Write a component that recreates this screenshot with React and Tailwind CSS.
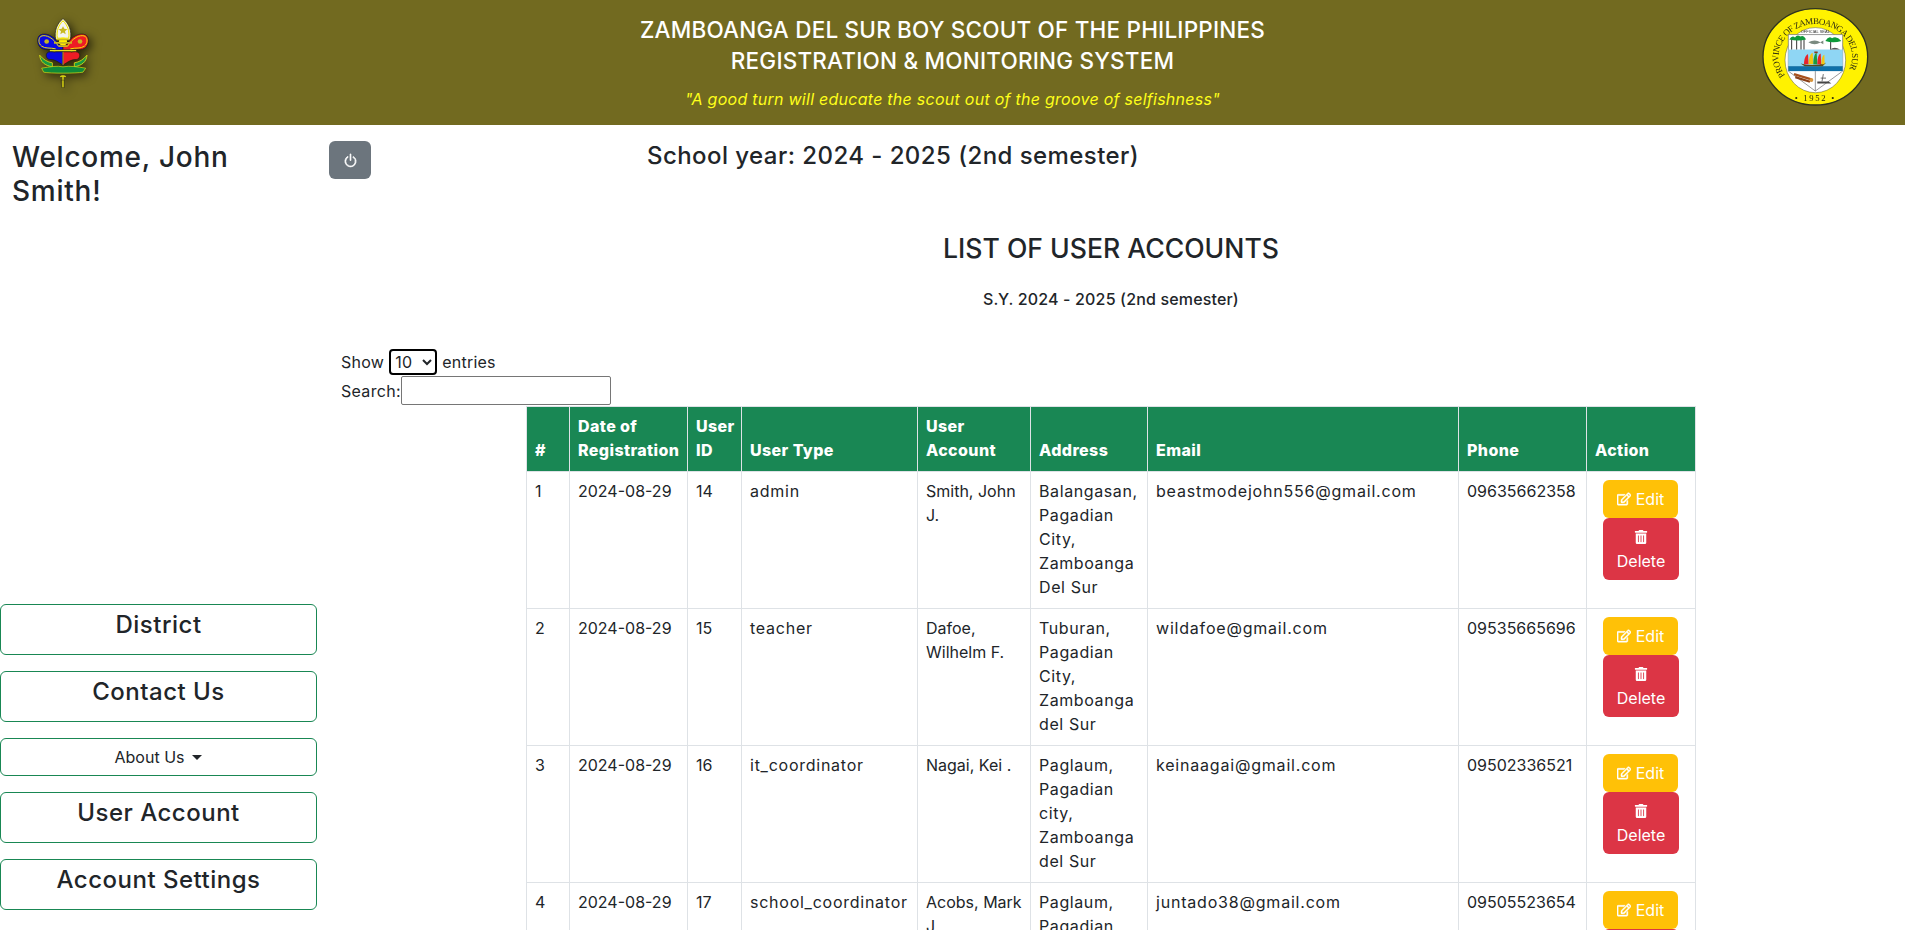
import { BsPower } from "react-icons/bs";
import { FaRegEdit, FaTrashAlt } from "react-icons/fa";

const accounts = [
  { id: 1, date: "2024-08-29", userId: 14, type: "admin", name: "Smith, John J.", address: "Balangasan, Pagadian City, Zamboanga Del Sur", email: "beastmodejohn556@gmail.com", phone: "09635662358" },
  { id: 2, date: "2024-08-29", userId: 15, type: "teacher", name: "Dafoe, Wilhelm F.", address: "Tuburan, Pagadian City, Zamboanga del Sur", email: "wildafoe@gmail.com", phone: "09535665696" },
  { id: 3, date: "2024-08-29", userId: 16, type: "it_coordinator", name: "Nagai, Kei .", address: "Paglaum, Pagadian city, Zamboanga del Sur", email: "keinaagai@gmail.com", phone: "09502336521" },
  { id: 4, date: "2024-08-29", userId: 17, type: "school_coordinator", name: "Acobs, Mark J.", address: "Paglaum, Pagadian City, Zamboanga del Sur", email: "juntado38@gmail.com", phone: "09505523654" },
];

const ScoutLogo = () => (
  <svg viewBox="100 45 180 230" className="w-[60px] h-[77px] drop-shadow-[3px_3px_5px_rgba(0,0,0,0.65)]">
    {/* top petal */}
    <path d="M190 55 C172 70 163 92 168 118 L212 118 C217 92 208 70 190 55Z" fill="#f5f0c0" stroke="#1c1c10" strokeWidth="2" />
    <path d="M190 62 C176 76 170 92 173 114 L207 114 C210 92 204 76 190 62Z" fill="#f4f4f0" stroke="#f0e400" strokeWidth="3" />
    <path d="M190 78 l4 8 9 1 -7 6 2 9 -8 -5 -8 5 2 -9 -7 -6 9 -1Z" fill="#c8b820" />
    {/* side petals */}
    <path d="M178 134 C165 108 140 96 122 104 C110 112 112 132 122 142 C134 152 150 146 166 150 L190 150 L190 134Z" fill="#0a0ae0" stroke="#1c1c10" strokeWidth="2" />
    <path d="M202 134 C215 108 240 96 258 104 C270 112 268 132 258 142 C246 152 230 146 214 150 L190 150 L190 134Z" fill="#ee1c25" stroke="#1c1c10" strokeWidth="2" />
    <path d="M176 138 C162 114 140 102 124 108 C115 116 116 130 126 138 C136 146 152 142 168 146" fill="none" stroke="#f0e400" strokeWidth="3" />
    <path d="M204 138 C218 114 240 102 256 108 C265 116 264 130 254 138 C244 146 228 142 212 146" fill="none" stroke="#f0e400" strokeWidth="3" />
    <circle cx="141" cy="124" r="7" fill="#c8b820" />
    <circle cx="241" cy="124" r="7" fill="#c8b820" />
    <circle cx="190" cy="124" r="12" fill="#ffee00" />
    <path d="M163 128 h54 M170 118 h40 M176 138 h28" stroke="#c8b820" strokeWidth="5" />
    {/* band */}
    <rect x="150" y="149" width="80" height="6" fill="#e8e020" stroke="#1c1c10" strokeWidth="1" />
    {/* lower shield */}
    <path d="M190 155 L190 195 C174 184 166 178 150 178 C138 176 136 160 146 156 C156 152 166 158 168 155Z" fill="#0a0ae0" stroke="#1c1c10" strokeWidth="2" />
    <path d="M190 155 L190 195 C206 184 214 178 230 178 C242 176 244 160 234 156 C224 152 214 158 212 155Z" fill="#ee1c25" stroke="#1c1c10" strokeWidth="2" />
    <path d="M190 155 V195" stroke="#e8e020" strokeWidth="2" />
    {/* scroll */}
    <path d="M120 165 C122 186 136 196 158 200 L158 188 C144 186 130 178 120 165Z" fill="#1a9a40" stroke="#e0dc10" strokeWidth="2.5" />
    <path d="M262 165 C260 186 246 196 224 200 L224 188 C238 186 252 178 262 165Z" fill="#1a9a40" stroke="#e0dc10" strokeWidth="2.5" />
    <path d="M126 204 C150 200 172 196 190 200 C210 196 234 200 258 204 L250 216 C230 220 150 220 132 216Z" fill="#0f8a38" stroke="#e0dc10" strokeWidth="2" />
    {/* stem */}
    <path d="M182 230 C186 226 194 226 198 230 M190 228 V262" stroke="#e0dc10" strokeWidth="4" fill="none" />
    <path d="M184 240 h10 v22 h-8Z" fill="none" stroke="#1c1c10" strokeWidth="1" />
  </svg>
);

// drawn in the coordinates of the 3x crop, the seal is stretched wider than tall
const ProvinceSeal = () => (
  <svg viewBox="186 25 321 295" preserveAspectRatio="none" className="w-[107px] h-[98px] blur-[0.3px]">
    <defs>
      <path id="sealArc" d="M256 228 A110 98 0 1 1 441 221" />
    </defs>
    <ellipse cx="346" cy="172" rx="157" ry="145" fill="#fff200" stroke="#2d3320" strokeWidth="4" />
    <ellipse cx="346" cy="182" rx="91" ry="98" fill="#fff" stroke="#55552a" strokeWidth="1.5" />
    <text fontFamily="Liberation Serif, serif" fontSize="27" fill="#2c2a10">
      <textPath href="#sealArc" textLength="426" lengthAdjust="spacing">PROVINCE OF ZAMBOANGA DEL SUR</textPath>
    </text>
    <text x="346" y="305" textAnchor="middle" fontFamily="Liberation Serif, serif" fontSize="26" fill="#2c2a10" letterSpacing="5">• 1952 •</text>
    <text x="346" y="101" textAnchor="middle" fontFamily="Liberation Sans, sans-serif" fontSize="12" fill="#333">OFFICIAL SEAL</text>
    {/* shield */}
    <path d="M265 105 H428 V215 L346 275 L265 215Z" fill="#fff" stroke="#666" strokeWidth="2" />
    <rect x="265" y="150" width="163" height="50" fill="#8fd6f4" />
    <rect x="265" y="200" width="163" height="15" fill="#0f70a8" />
    {/* palms */}
    <path d="M275 150 V118 M290 150 V118 M303 150 V118 M312 150 V118" stroke="#333" strokeWidth="3" />
    <path d="M268 120 q8 -14 17 -6 q6 -10 16 -3 q10 -6 17 9 q-24 6 -50 0Z" fill="#0f9a3a" />
    <path d="M392 150 V122" stroke="#333" strokeWidth="3" />
    <path d="M376 124 q10 -16 20 -8 q14 -8 28 8 q-24 8 -48 0Z" fill="#0f9a3a" />
    <path d="M390 150 q14 -10 30 0Z" fill="#555" />
    <path d="M325 128 q20 -10 36 0 l9 -5 v11 l-9 -5 q-18 10 -36 -1Z" fill="#7a8a80" />
    {/* vinta */}
    <path d="M302 192 Q340 202 378 190 L368 200 H314Z" fill="#5a4a1a" />
    <path d="M312 194 C312 176 318 166 324 164 L326 194Z" fill="#e8232a" />
    <path d="M326 194 C326 174 332 162 338 160 L340 194Z" fill="#f2c612" />
    <path d="M340 194 C340 174 344 162 350 160 L352 194Z" fill="#1b9a3c" />
    <path d="M352 194 C352 176 356 164 362 162 L364 194Z" fill="#e8232a" />
    <path d="M364 194 C364 178 368 168 373 166 L374 194Z" fill="#f2c612" />
    <path d="M343 156 h10 v5 h-10Z" fill="#8a3a1a" />
    <path d="M346 215 V275" stroke="#666" strokeWidth="2" />
    {/* logs */}
    <path d="M282 224 L334 240" stroke="#a8501c" strokeWidth="7" />
    <path d="M286 233 L330 247" stroke="#8a4018" strokeWidth="7" />
    <circle cx="334" cy="242" r="6" fill="#d8943a" />
    {/* machine */}
    <path d="M352 246 h34 l8 6 h-42Z" fill="#444" />
    <path d="M366 246 l4 -22 M362 236 h16" stroke="#555" strokeWidth="2.5" />
  </svg>
);

const SideButton = ({ children }) => (
  <a className="block h-[51px] border border-[#198754] rounded-md text-center text-[24px] leading-[36px] tracking-[0.5px] font-medium text-[#212529] pt-[2px]">
    {children}
  </a>
);

const App = () => {
  return (
    <div className="h-[930px] overflow-hidden bg-white text-[#212529] font-['Inter',sans-serif]">
      <header className="h-[125px] bg-[#726a20] flex justify-between">
        <div className="w-[146px] pl-[33px] pt-[15px] shrink-0">
          <ScoutLogo />
        </div>
        <div className="flex-1 text-center text-white pt-[14px]">
          <h1 className="text-[22.5px] leading-[31px] tracking-[0.2px] font-medium">
            ZAMBOANGA DEL SUR BOY SCOUT OF THE PHILIPPINES
            <br />
            REGISTRATION &amp; MONITORING SYSTEM
          </h1>
          <p className="mt-[11px] text-[16px] leading-[24px] tracking-[0.26px] italic text-[#ffff1a]">
            "A good turn will educate the scout out of the groove of selfishness"
          </p>
        </div>
        <div className="w-[146px] pl-[3px] pt-[8px] shrink-0">
          <ProvinceSeal />
        </div>
      </header>

      <div className="flex">
        <aside className="w-[317px] shrink-0">
          <h3 className="w-[270px] pl-[12px] pt-[16px] text-[28px] leading-[33.6px] tracking-[0.75px] font-medium">Welcome, John Smith!</h3>
          <nav className="mt-[396px] flex flex-col gap-[16px]">
            <SideButton>District</SideButton>
            <SideButton>Contact Us</SideButton>
            <a className="h-[38px] border border-[#198754] rounded-md flex items-center justify-center text-[16px]">
              About Us
              <span className="ml-[8px] border-x-[5px] border-x-transparent border-t-[5px] border-t-[#212529]" />
            </a>
            <SideButton>User Account</SideButton>
            <SideButton>Account Settings</SideButton>
          </nav>
        </aside>

        <main className="flex-1 pl-[12px] pr-[24px] pt-[16px]">
          <div className="flex">
            <button className="w-[42px] h-[38px] rounded-md bg-[#6c757d] text-white flex items-center justify-center">
              <BsPower className="text-[15px]" stroke="currentColor" strokeWidth={0.7} />
            </button>
            <h4 className="ml-[276px] text-[24px] leading-[29px] tracking-[0.44px] font-medium">School year: 2024 - 2025 (2nd semester)</h4>
          </div>

          <div className="pl-[12px]">
            <h3 className="mt-[52px] text-center text-[26.6px] leading-[34px] font-medium">LIST OF USER ACCOUNTS</h3>
            <p className="mt-[22px] text-center text-[16px] leading-[24px] tracking-[0.16px] font-medium">S.Y. 2024 - 2025 (2nd semester)</p>

            <div className="mt-[38px] flex items-center h-[26px] text-[16px] tracking-[0.25px]">
              Show
              <select className="mx-[5px] w-[48px] h-[26px] border-2 border-black rounded text-[16px]">
                <option>10</option>
              </select>
              entries
            </div>
            <div className="flex items-center h-[31px] text-[16px] tracking-[0.3px]">
              Search:
              <input className="w-[210px] h-[29px] border border-[#767676] rounded-[2px]" />
            </div>

            <table className="mx-auto table-fixed border-collapse w-[1169px] text-[16px] leading-[24px]">
              <colgroup>
                <col className="w-[43px]" />
                <col className="w-[118px]" />
                <col className="w-[54px]" />
                <col className="w-[176px]" />
                <col className="w-[113px]" />
                <col className="w-[117px]" />
                <col className="w-[311px]" />
                <col className="w-[128px]" />
                <col className="w-[109px]" />
              </colgroup>
              <thead>
                <tr className="bg-[#198754] text-white h-[65px] text-left align-bottom">
                  {["#", "Date of Registration", "User ID", "User Type", "User Account", "Address", "Email", "Phone", "Action"].map((h) => (
                    <th key={h} className="border border-[#dee2e6] px-[8px] pt-[7px] pb-[9px] font-extrabold tracking-[0.4px]">{h}</th>
                  ))}
                </tr>
              </thead>
              <tbody>
                {accounts.map((a) => (
                  <tr key={a.id} className="h-[137px] align-top">
                    <td className="border border-[#dee2e6] px-[8px] pt-[7px]">{a.id}</td>
                    <td className="border border-[#dee2e6] px-[8px] pt-[7px]">{a.date}</td>
                    <td className="border border-[#dee2e6] px-[8px] pt-[7px]">{a.userId}</td>
                    <td className="border border-[#dee2e6] px-[8px] pt-[7px] tracking-[0.75px]">{a.type}</td>
                    <td className="border border-[#dee2e6] px-[8px] pt-[7px]">{a.name}</td>
                    <td className="border border-[#dee2e6] px-[8px] pt-[7px] tracking-[0.6px]">{a.address}</td>
                    <td className="border border-[#dee2e6] px-[8px] pt-[7px] tracking-[0.8px]">{a.email}</td>
                    <td className="border border-[#dee2e6] px-[8px] pt-[7px]">{a.phone}</td>
                    <td className="border border-[#dee2e6] p-[8px]">
                      <div className="ml-[8px] w-[76px]">
                        <button className="w-[75px] h-[38px] rounded-md bg-[#ffc107] text-white flex items-center justify-center gap-[5px]">
                          <FaRegEdit className="text-[14px]" stroke="currentColor" strokeWidth={18} />
                          Edit
                        </button>
                        <button className="w-[76px] h-[62px] rounded-md bg-[#dc3545] text-white flex flex-col items-center justify-center">
                          <FaTrashAlt className="text-[14px] my-[5px]" />
                          Delete
                        </button>
                      </div>
                    </td>
                  </tr>
                ))}
              </tbody>
            </table>
          </div>
        </main>
      </div>
    </div>
  );
};

export default App;
